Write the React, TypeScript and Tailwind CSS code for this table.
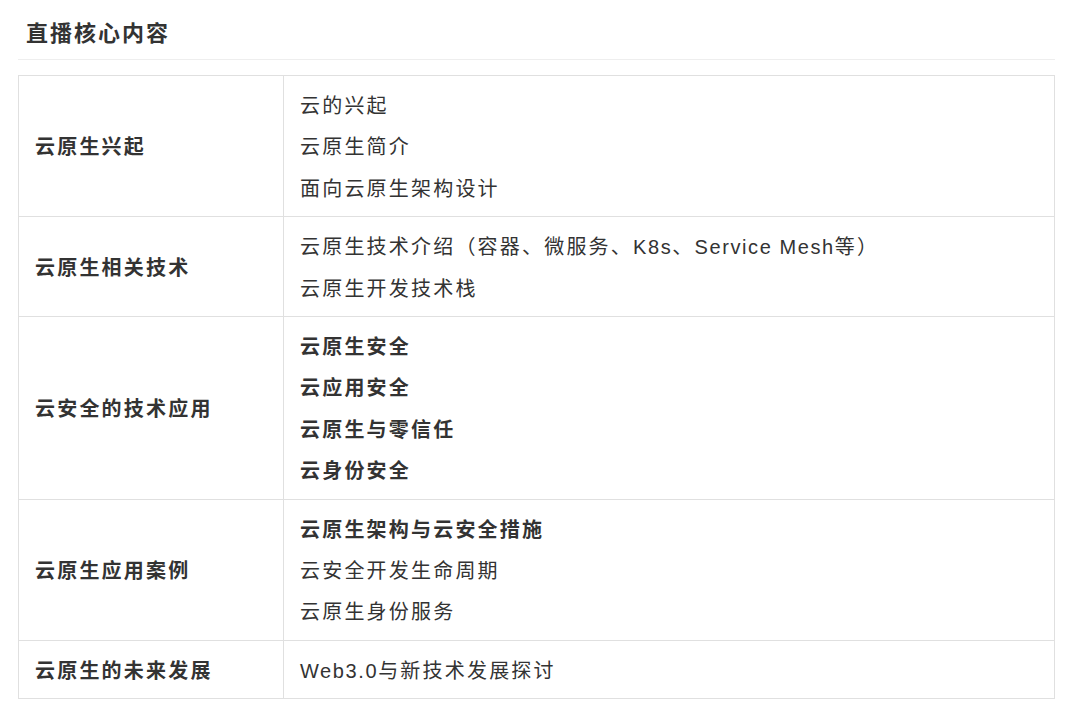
const rows: { title: string; items: { text: string; bold?: boolean }[] }[] = [
  {
    title: "云原生兴起",
    items: [{ text: "云的兴起" }, { text: "云原生简介" }, { text: "面向云原生架构设计" }],
  },
  {
    title: "云原生相关技术",
    items: [
      { text: "云原生技术介绍（容器、微服务、K8s、Service Mesh等）" },
      { text: "云原生开发技术栈" },
    ],
  },
  {
    title: "云安全的技术应用",
    items: [
      { text: "云原生安全", bold: true },
      { text: "云应用安全", bold: true },
      { text: "云原生与零信任", bold: true },
      { text: "云身份安全", bold: true },
    ],
  },
  {
    title: "云原生应用案例",
    items: [
      { text: "云原生架构与云安全措施", bold: true },
      { text: "云安全开发生命周期" },
      { text: "云原生身份服务" },
    ],
  },
  {
    title: "云原生的未来发展",
    items: [{ text: "Web3.0与新技术发展探讨" }],
  },
]

// latin runs get a helvetica-like face, like the original
function Mixed({ text }: { text: string }) {
  const parts = text.split(/([A-Za-z0-9. ]+)/)
  return (
    <>
      {parts.map((p, i) =>
        /[A-Za-z0-9]/.test(p) ? (
          <span key={i} className="font-['Liberation_Sans',sans-serif] tracking-[1.6px] leading-none">
            {p}
          </span>
        ) : (
          p
        )
      )}
    </>
  )
}

export default function App() {
  return (
    <div className="min-h-screen bg-white text-[#333] font-['Noto_Sans_CJK_SC','Noto_Sans',sans-serif]">
      <div className="w-[1037px] ml-[18px]">

        {/* header */}
        <div className="h-[60px] border-b border-[#eeeeee] pl-[8px] pt-[16px]">
          <h1 className="text-[22px] leading-[30px] font-semibold tracking-[2px]">
            直播核心内容
          </h1>
        </div>

        {/* table */}
        <table className="mt-[15px] w-full border-collapse border border-[#e0e0e0] text-[20px] tracking-[2.2px]">
          <tbody>
            {rows.map((row) => (
              <tr key={row.title}>
                <td className="w-[265px] border border-[#e0e0e0] pl-[16px] font-bold align-middle">
                  {row.title}
                </td>
                <td className="border border-[#e0e0e0] pl-[16px] py-[8px]">
                  {row.items.map((it) => (
                    <p
                      key={it.text}
                      className={it.bold ? "leading-[41.4px] font-bold" : "leading-[41.4px]"}
                    >
                      <Mixed text={it.text} />
                    </p>
                  ))}
                </td>
              </tr>
            ))}
          </tbody>
        </table>

      </div>
    </div>
  )
}
